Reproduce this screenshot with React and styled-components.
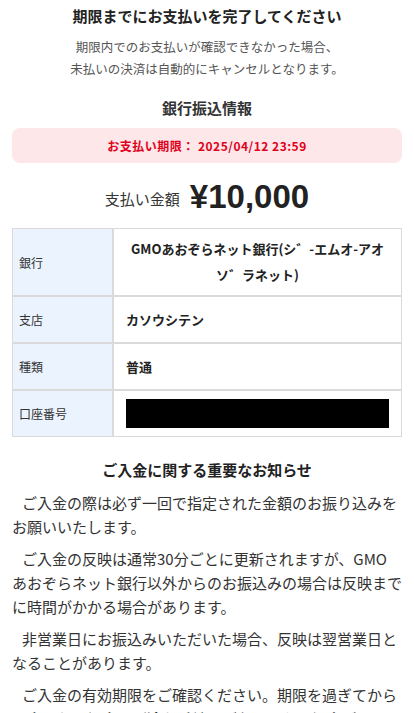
import styled, { createGlobalStyle } from "styled-components"

const Global = createGlobalStyle`
    body {
        margin: 0;
        background: #fff;
        font-family: "Noto Sans CJK JP", "Noto Sans", sans-serif;
        color: #222;
    }
`

const rows = [
    { label: "銀行", value: <>GMOあおぞらネット銀行(シ゛-エムオ-アオ<br />ソ゛ラネット)</>, tall: true },
    { label: "支店", value: "カソウシテン" },
    { label: "種類", value: "普通" },
    { label: "口座番号", hidden: true },
]

const notices = [
    <>ご入金の際は必ず一回で指定された金額のお振り込みを<br />お願いいたします。</>,
    <>ご入金の反映は通常30分ごとに更新されますが、GMO<br />あおぞらネット銀行以外からのお振込みの場合は反映まで<br />に時間がかかる場合があります。</>,
    <>非営業日にお振込みいただいた場合、反映は翌営業日と<br />なることがあります。</>,
    <>ご入金の有効期限をご確認ください。期限を過ぎてから<br />入金された場合、別途お手続きが必要となる場合があります。</>,
]

export default function App() {
    return (
        <Page>
            <Global />
            <Title>期限までにお支払いを完了してください</Title>
            <Lead>
                期限内でのお支払いが確認できなかった場合、<br />
                未払いの決済は自動的にキャンセルとなります。
            </Lead>
            <SectionTitle>銀行振込情報</SectionTitle>
            <Deadline>お支払い期限： 2025/04/12 23:59</Deadline>
            <Amount>
                <span className="label">支払い金額</span>
                <span className="price">¥10,000</span>
            </Amount>
            <Table>
                {rows.map((r) => (
                    <Row key={r.label} $tall={r.tall}>
                        <Label>{r.label}</Label>
                        <Value $center={r.tall}>
                            {r.hidden ? <Masked /> : r.value}
                        </Value>
                    </Row>
                ))}
            </Table>
            <NoticeTitle>ご入金に関する重要なお知らせ</NoticeTitle>
            {notices.map((n, i) => (
                <Notice key={i}>{n}</Notice>
            ))}
        </Page>
    )
}

const Page = styled.div`
    padding: 5px 12px 0;
    display: flex;
    flex-direction: column;
`

const Title = styled.h1`
    margin: 0;
    font-size: 15px;
    line-height: 22px;
    font-weight: bold;
    text-align: center;
    color: #222;
`

const Lead = styled.p`
    margin: 9px 0 0;
    font-size: 12.5px;
    line-height: 22px;
    text-align: center;
    color: #555;
`

const SectionTitle = styled.h2`
    margin: 17px 0 0;
    font-size: 15px;
    line-height: 22px;
    font-weight: bold;
    text-align: center;
    color: #333;
`

const Deadline = styled.div`
    margin-top: 9px;
    height: 35px;
    display: flex;
    align-items: center;
    justify-content: center;
    background: #fde7e9;
    border-radius: 8px;
    color: #e0001b;
    font-size: 12px;
    font-weight: bold;
    letter-spacing: 0.5px;
`

const Amount = styled.div`
    margin-top: 14px;
    height: 40px;
    display: flex;
    align-items: center;
    justify-content: center;
    gap: 10px;

    .label {
        font-size: 15px;
        color: #333;
        padding-top: 2px;
    }

    .price {
        font-size: 33px;
        font-weight: bold;
        color: #222;
        font-family: "Liberation Sans", "Noto Sans", sans-serif;
    }
`

const Table = styled.div`
    margin-top: 11px;
    display: flex;
    flex-direction: column;
`

const Row = styled.div`
    display: grid;
    grid-template-columns: 101px 1fr;
    height: ${(p) => (p.$tall ? "68px" : "47px")};
`

const Cell = styled.div`
    border: 1px solid #dadada;
    display: flex;
    align-items: center;
`

const Label = styled(Cell)`
    background: #ebf3fe;
    padding-left: 6px;
    font-size: 12px;
    color: #333;
`

const Value = styled(Cell)`
    padding: 0 12px;
    font-size: 13px;
    font-weight: bold;
    line-height: 26px;
    color: #222;
    justify-content: ${(p) => (p.$center ? "center" : "flex-start")};
    text-align: ${(p) => (p.$center ? "center" : "left")};
`

const Masked = styled.div`
    width: 100%;
    height: 29px;
    background: #000;
`

const NoticeTitle = styled.h3`
    margin: 22px 0 0;
    font-size: 15px;
    line-height: 22px;
    font-weight: bold;
    text-align: center;
    color: #222;
`

const Notice = styled.p`
    margin: 10px 0 0;
    font-size: 15px;
    line-height: 24px;
    text-indent: 10px;
    color: #333;
    white-space: nowrap;

    & + & {
        margin-top: 8px;
    }
`
